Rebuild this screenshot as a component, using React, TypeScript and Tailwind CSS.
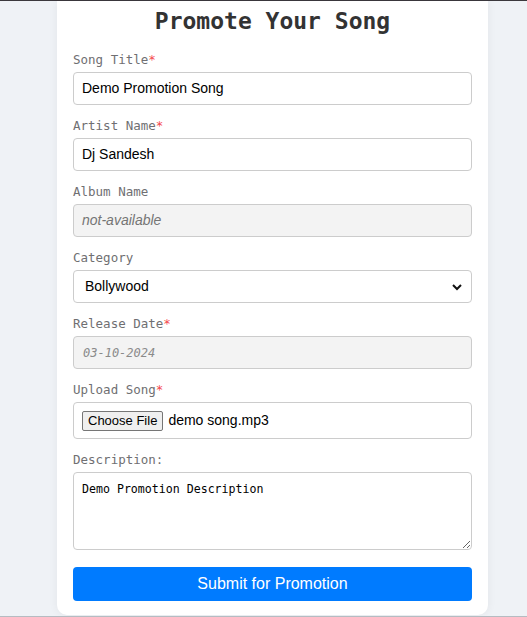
import React from 'react';

const mono = { fontFamily: '"DejaVu Sans Mono", "Liberation Mono", monospace' };
const sans = { fontFamily: '"Liberation Sans", Arial, sans-serif' };

function Label({ text, required }: { text: string; required?: boolean }) {
  return (
    <label
      className="block h-[18px] mb-[3px] text-[12.5px] leading-[18px] text-[#6f6f72]"
      style={mono}
    >
      {text}
      {required && <span className="text-[#f5474d]">*</span>}
    </label>
  );
}

function Field({
  label,
  required,
  children,
  last,
}: {
  label: string;
  required?: boolean;
  children: React.ReactNode;
  last?: boolean;
}) {
  return (
    <div className={last ? 'mb-[17px]' : 'mb-[12px]'}>
      <Label text={label} required={required} />
      {children}
    </div>
  );
}

function TextBox({ value, muted, italic }: { value: string; muted?: boolean; italic?: boolean }) {
  return (
    <div
      className={`h-[33px] flex items-center px-[8px] border border-[#cccccc] rounded-[4px] text-[14px] ${
        muted ? 'bg-[#f3f3f3] text-[#757575]' : 'bg-white text-black'
      } ${italic ? 'italic' : ''}`}
      style={sans}
    >
      {value}
    </div>
  );
}

export default function App() {
  return (
    <div className="min-h-[617px] bg-[#eff2f6] flex flex-col">
      <div className="h-px bg-[#3b383d]" />
      <div className="flex-1 flex justify-center pl-[18px]">
        <div className="w-[431px] h-[614px] bg-white rounded-b-[10px] shadow-[0_0_10px_rgba(0,0,0,0.06)] px-4 pt-[5px] pb-[13px]">
          <h1
            className="text-center text-[23px] leading-[30px] font-bold text-[#333333] mb-[15px]"
            style={mono}
          >
            Promote Your Song
          </h1>

          <Field label="Song Title" required>
            <TextBox value="Demo Promotion Song" />
          </Field>

          <Field label="Artist Name" required>
            <TextBox value="Dj Sandesh" />
          </Field>

          <Field label="Album Name">
            <TextBox value="not-available" muted italic />
          </Field>

          <Field label="Category">
            <div
              className="h-[33px] flex items-center justify-between pl-[11px] pr-[8px] border border-[#cccccc] rounded-[4px] bg-white text-[14px] text-black"
              style={sans}
            >
              <span>Bollywood</span>
              <svg width="12" height="12" viewBox="0 0 12 12">
                <path d="M2 4 L6 8 L10 4" fill="none" stroke="#111" strokeWidth="2" />
              </svg>
            </div>
          </Field>

          <Field label="Release Date" required>
            <div
              className="h-[33px] flex items-center px-[9px] border border-[#cccccc] rounded-[4px] bg-[#f3f3f3] text-[12px] italic text-[#8a8a8a]"
              style={mono}
            >
              03-10-2024
            </div>
          </Field>

          <Field label="Upload Song" required>
            <div
              className="h-[37px] flex items-center gap-[5px] px-2 border border-[#cccccc] rounded-[4px] bg-white text-[14px] text-black"
              style={sans}
            >
              <span className="h-[20px] px-[5px] flex items-center bg-[#efefef] border border-[#767676] rounded-[2px] text-[13px]">
                Choose File
              </span>
              <span>demo song.mp3</span>
            </div>
          </Field>

          <Field label="Description:" last>
            <textarea
              readOnly
              defaultValue="Demo Promotion Description"
              className="block w-full h-[78px] px-2 py-2 border border-[#cccccc] rounded-[4px] bg-white text-[11.6px] text-black outline-none"
              style={mono}
            />
          </Field>

          <button
            className="w-full h-[34px] rounded-[4px] bg-[#007bff] text-white text-[16px]"
            style={sans}
          >
            Submit for Promotion
          </button>
        </div>
      </div>
      <div className="h-px bg-[#b5bcc2]" />
    </div>
  );
}
